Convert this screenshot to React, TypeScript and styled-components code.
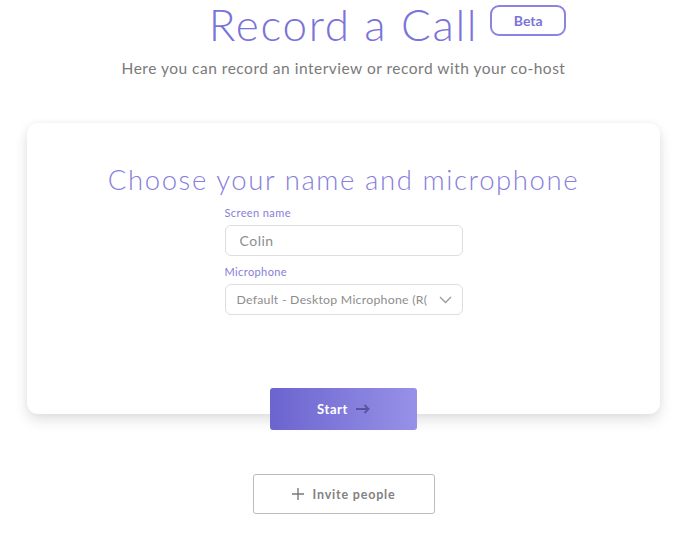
import React from "react";
import styled, { createGlobalStyle } from "styled-components";

const Global = createGlobalStyle`
  html, body { margin: 0; padding: 0; background: #ffffff; }
  body { font-family: Lato, "Open Sans", sans-serif; }
  * { box-sizing: border-box; }
`;

const Page = styled.div`
  display: flex;
  flex-direction: column;
  align-items: center;
  padding: 0 0 0 11px;
  width: 676px;
`;

const TitleWrap = styled.div`
  position: relative;
`;

const Title = styled.h1`
  margin: 0;
  font-family: Lato, sans-serif;
  font-weight: 300;
  font-size: 44px;
  line-height: 48px;
  letter-spacing: 1.7px;
  color: #7a73d9;
`;

const Badge = styled.span`
  position: absolute;
  left: calc(100% + 12px);
  top: 5px;
  width: 76px;
  height: 31px;
  border: 2px solid #8a83e0;
  border-radius: 9px;
  display: flex;
  align-items: center;
  justify-content: center;
  font-family: Lato, sans-serif;
  font-weight: 700;
  font-size: 14px;
  color: #7a73d9;
`;

const Subtitle = styled.p`
  margin: 11px 0 0;
  font-family: Lato, sans-serif;
  font-size: 15.5px;
  letter-spacing: 0.5px;
  color: #7a7a7a;
`;

const Card = styled.div`
  margin-top: 46px;
  width: 633px;
  height: 291px;
  background: #fff;
  border-radius: 11px;
  box-shadow: 0 6px 14px rgba(0, 0, 0, 0.12), 0 0 6px rgba(0, 0, 0, 0.04);
  display: flex;
  flex-direction: column;
  align-items: center;
`;

const Heading = styled.h2`
  margin: 40px 0 0;
  font-family: Lato, sans-serif;
  font-weight: 300;
  font-size: 27.5px;
  line-height: 34px;
  letter-spacing: 1.6px;
  color: #8780dc;
`;

const Form = styled.div`
  width: 238px;
  display: flex;
  flex-direction: column;
`;

const Label = styled.label`
  font-family: Lato, sans-serif;
  font-size: 11px;
  letter-spacing: 0.4px;
  color: #847ed6;
  margin: 9px 0 6px;
`;

const Field = styled.div`
  height: 31px;
  border: 1.5px solid #dedede;
  border-radius: 6px;
  display: flex;
  align-items: center;
  gap: 8px;
  padding: 0 10px 0 ${(p: { $pad?: number }) => p.$pad ?? 14}px;
  font-family: Lato, sans-serif;
  color: #8d8d8d;
`;

const FieldText = styled.span<{ $size: number; $spacing: number }>`
  flex: 1;
  min-width: 0;
  font-size: ${(p) => p.$size}px;
  letter-spacing: ${(p) => p.$spacing}px;
  white-space: nowrap;
  overflow: hidden;
`;

const StartButton = styled.button`
  margin-top: -26px;
  width: 147px;
  height: 42px;
  border: none;
  border-radius: 3px;
  background: linear-gradient(90deg, #6c64cf 0%, #8a84e0 70%, #9891e8 100%);
  display: flex;
  align-items: center;
  justify-content: center;
  gap: 8px;
  font-family: Lato, sans-serif;
  font-weight: 700;
  font-size: 13px;
  letter-spacing: 0.6px;
  color: #fff;
  z-index: 1;
`;

const InviteButton = styled.button`
  margin-top: 44px;
  width: 182px;
  height: 40px;
  border: 1.5px solid #bcbcbc;
  border-radius: 3px;
  background: #fff;
  display: flex;
  align-items: center;
  justify-content: center;
  gap: 9px;
  font-family: Lato, sans-serif;
  font-weight: 700;
  font-size: 12.5px;
  letter-spacing: 0.8px;
  color: #828282;
`;

export default function App() {
  return (
    <>
      <Global />
      <Page>
        <TitleWrap>
          <Title>Record a Call</Title>
          <Badge>Beta</Badge>
        </TitleWrap>
        <Subtitle>Here you can record an interview or record with your co-host</Subtitle>
        <Card>
          <Heading>Choose your name and microphone</Heading>
          <Form>
            <Label>Screen name</Label>
            <Field>
              <FieldText $size={14} $spacing={0.5}>Colin</FieldText>
            </Field>
            <Label>Microphone</Label>
            <Field $pad={11}>
              <FieldText $size={12.3} $spacing={0.25}>Default - Desktop Microphone (R(</FieldText>
              <svg width="13" height="8" viewBox="0 0 13 8" fill="none">
                <path d="M1 1l5.5 5.5L12 1" stroke="#9a9a9a" strokeWidth="1.3" />
              </svg>
            </Field>
          </Form>
        </Card>
        <StartButton>
          Start
          <svg width="14" height="10" viewBox="0 0 14 10" fill="none">
            <path d="M0 5h12.5M8.5 1l4 4-4 4" stroke="#5a529f" strokeWidth="1.8" />
          </svg>
        </StartButton>
        <InviteButton>
          <svg width="12" height="12" viewBox="0 0 12 12" fill="none">
            <path d="M6 0v12M0 6h12" stroke="#7a7a7a" strokeWidth="1.4" />
          </svg>
          Invite people
        </InviteButton>
      </Page>
    </>
  );
}
